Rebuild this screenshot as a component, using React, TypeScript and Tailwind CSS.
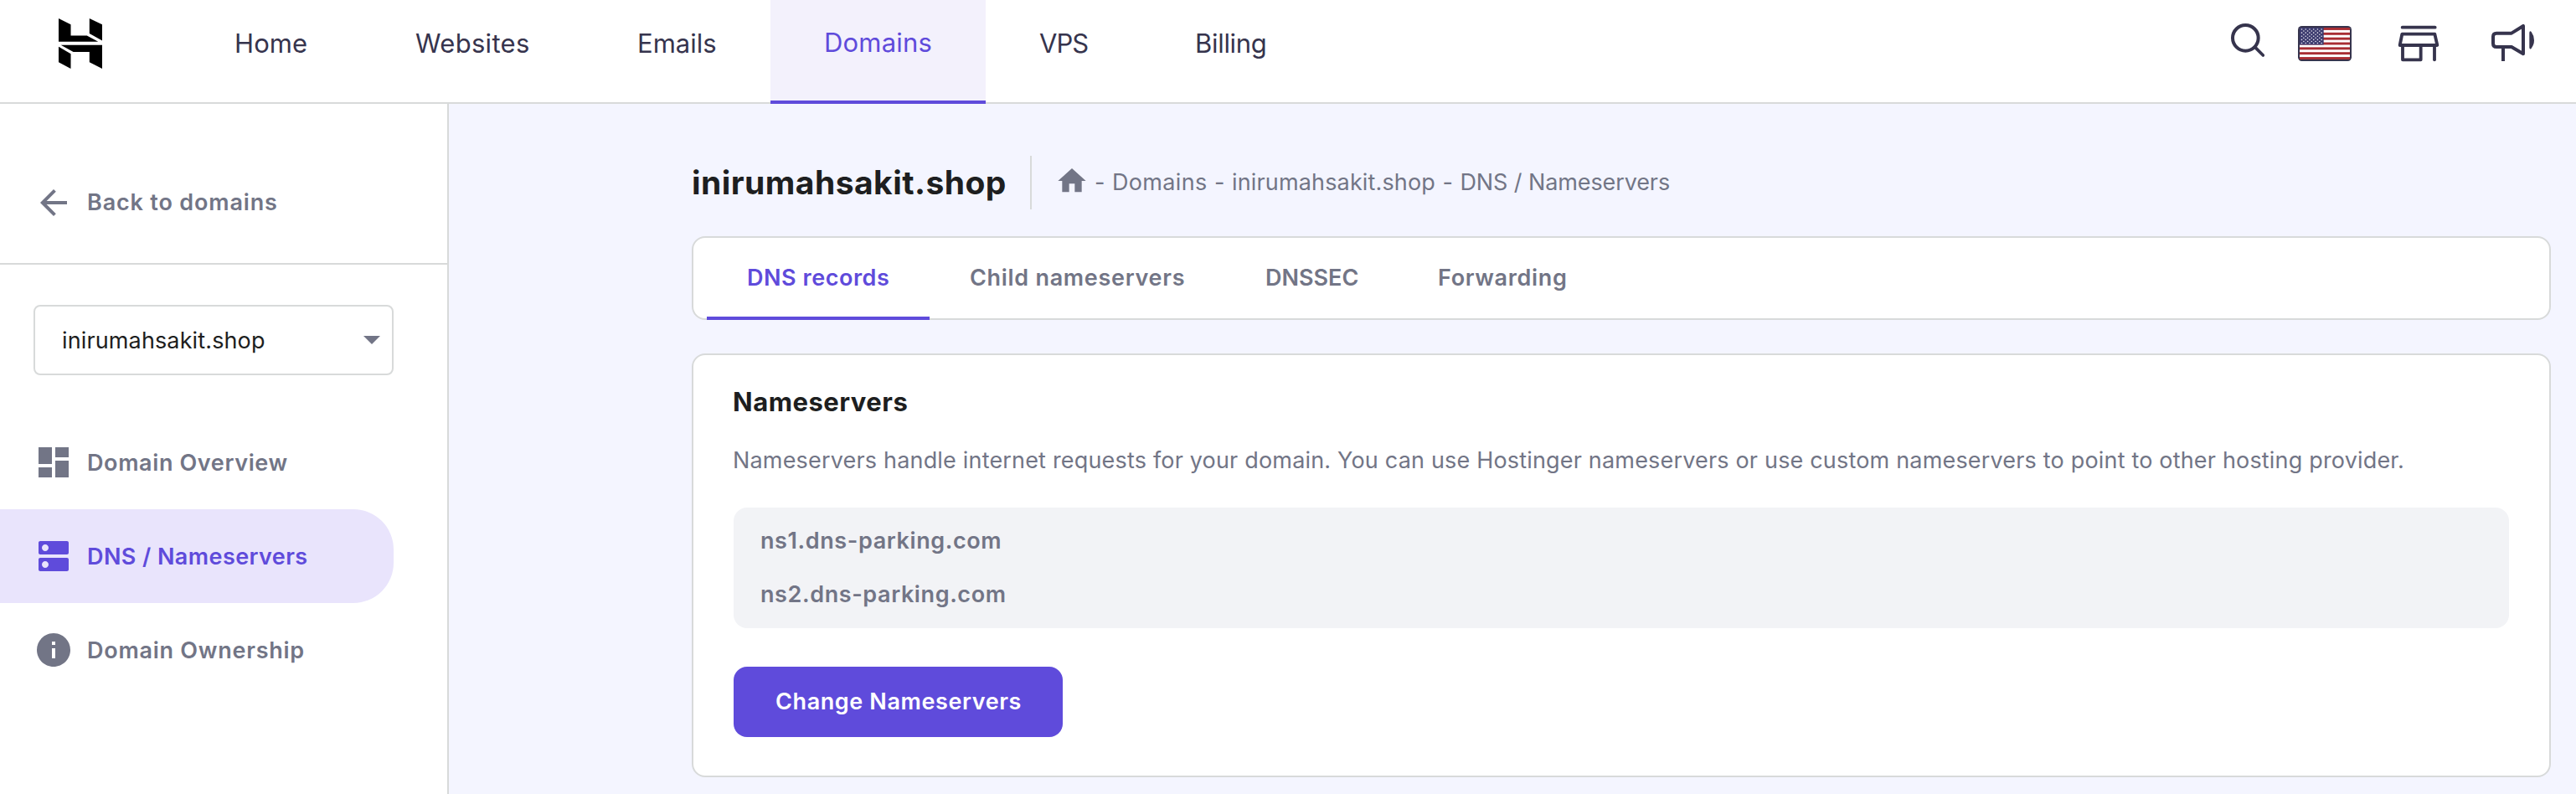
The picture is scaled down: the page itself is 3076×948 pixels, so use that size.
import type { ReactNode } from "react";
import { MdArrowBack, MdArrowDropDown, MdDashboard, MdDns, MdHome, MdInfo } from "react-icons/md";

function Logo() {
  return (
    <svg className="mt-[22px] ml-[70px] h-[60px] w-[52px] shrink-0" viewBox="30 24 154 179" preserveAspectRatio="none" fill="#000">
      <path d="M30 24 L73 46 V85 H130 L170 107 H30 Z" />
      <path d="M139 24 L184 46 V103 L139 78 Z" />
      <path d="M38 119 H184 V203 L139 180 V143 H82 Z" />
      <path d="M30 125 L73 150 V203 L30 180 Z" />
    </svg>
  );
}

function SearchIcon() {
  return (
    <svg className="mt-[28px] h-[40px] w-[40px]" viewBox="42 24 120 120" fill="none" stroke="#36344d" strokeLinecap="round">
      <circle cx="94" cy="76" r="46" strokeWidth="12" />
      <path d="M129 110 L157 138" strokeWidth="11" />
    </svg>
  );
}

function FlagIcon() {
  const stripe = 114 / 13;
  return (
    <svg className="mt-[31px] ml-[40px] h-[42px] w-[64px]" viewBox="0 0 192 126">
      <rect x="0" y="0" width="192" height="126" rx="14" fill="#36344d" />
      <rect x="6" y="6" width="180" height="114" rx="4" fill="#ffffff" />
      {[0, 2, 4, 6, 8, 10, 12].map((i) => (
        <rect key={i} x="6" y={6 + i * stripe} width="180" height={stripe} fill="#a82d33" />
      ))}
      <rect x="6" y="6" width="86" height={stripe * 7} fill="#3c3b6e" />
      {[0, 1, 2, 3, 4, 5, 6, 7, 8].map((row) =>
        (row % 2 === 0 ? [0, 1, 2, 3, 4, 5] : [0.5, 1.5, 2.5, 3.5, 4.5]).map((col) => (
          <circle key={`${row}-${col}`} cx={13.5 + col * 14.2} cy={12 + row * 6.2} r="2.4" fill="#e6e6f0" />
        ))
      )}
    </svg>
  );
}

function StoreIcon() {
  return (
    <svg className="mt-[30px] ml-[55px] h-[44px] w-[50px]" viewBox="39 30 150 132" fill="none" stroke="#36344d" strokeWidth="11.5" strokeLinecap="round" strokeLinejoin="round">
      <path d="M56 38 H173" />
      <path d="M55 62 H172 L181 102 H47 Z" />
      <path d="M57 102 V154 H122 V102" />
      <path d="M171 102 V154" />
    </svg>
  );
}

function MegaphoneIcon() {
  return (
    <svg className="mt-[29px] mr-[50px] ml-[62px] h-[45px] w-[51px]" viewBox="375 27 153 135" fill="none" stroke="#36344d" strokeWidth="12" strokeLinejoin="round">
      <path d="M393 59 H447 L489 33 V133 L447 108 H393 Q381 108 381 96 V71 Q381 59 393 59 Z" />
      <path d="M417 108 V159" />
      <path d="M511 56 Q513 49 518 54 Q528 68 528 84 Q528 100 518 113 Q513 119 511 111 Z" fill="#36344d" stroke="none" />
    </svg>
  );
}

function NavItem({ label, className }: { label: string; className: string }) {
  return (
    <a className={`flex shrink-0 items-center pb-5 pl-16 text-[31px] leading-none whitespace-nowrap ${className}`}>
      {label}
    </a>
  );
}

function SideItem({ icon, label, className }: { icon: ReactNode; label: string; className: string }) {
  return (
    <a className={`flex h-28 w-[470px] items-center gap-4 pl-10 text-[27px] leading-none font-semibold whitespace-nowrap ${className}`}>
      {icon}
      {label}
    </a>
  );
}

function Tab({ label, className }: { label: string; className: string }) {
  return (
    <a className={`flex h-[98px] items-center border-b-4 pl-12 text-[27px] leading-none font-semibold whitespace-nowrap ${className}`}>
      {label}
    </a>
  );
}

export default function App() {
  return (
    <div className="flex h-[948px] w-full flex-col overflow-hidden bg-[#f4f5ff] font-['Inter','Noto_Sans',sans-serif] text-[#727586]">
      <header className="flex h-[124px] shrink-0 items-start border-b-2 border-[#d8dada] bg-white">
        <Logo />
        <nav className="ml-[94px] flex items-start">
          <NavItem label="Home" className="h-[122px] w-[216px] tracking-[0.1px] text-[#36344d]" />
          <NavItem label="Websites" className="h-[122px] w-[265px] tracking-[0.3px] text-[#36344d]" />
          <NavItem label="Emails" className="h-[122px] w-[223px] text-[#36344d]" />
          <NavItem label="Domains" className="h-[124px] w-[257px] border-b-4 border-[#5f4bdb] bg-[#f3f1fc] tracking-[0.2px] text-[#5f4bdb]" />
          <NavItem label="VPS" className="h-[122px] w-[186px] tracking-[-1px] text-[#36344d]" />
          <NavItem label="Billing" className="h-[122px] w-[160px] tracking-[-0.3px] text-[#36344d]" />
        </nav>
        <div className="ml-auto flex items-start">
          <SearchIcon />
          <FlagIcon />
          <StoreIcon />
          <MegaphoneIcon />
        </div>
      </header>

      <div className="flex min-h-0 flex-1">
        <aside className="w-[536px] shrink-0 border-r-2 border-[#d8dada] bg-white">
          <a className="flex h-[192px] items-center gap-4 border-b-2 border-[#d8dada] pt-[46px] pl-10 text-[27px] leading-none font-semibold tracking-[0.83px]">
            <MdArrowBack className="size-12" />
            <span className="mb-0.5">Back to domains</span>
          </a>
          <div className="mt-12 ml-10 flex h-[84px] w-[430px] items-center justify-between rounded-lg border-2 border-[#d8dada] pl-[32px] text-[27px] leading-none tracking-[0.13px] text-[#1d1e20]">
            inirumahsakit.shop
            <MdArrowDropDown className="mb-0.5 size-12 text-[#727586]" />
          </div>
          <nav className="mt-12">
            <SideItem icon={<MdDashboard className="size-12" />} label="Domain Overview" className="tracking-[0.62px]" />
            <SideItem icon={<MdDns className="size-12" />} label="DNS / Nameservers" className="rounded-r-[48px] bg-[#e9e4fc] tracking-[0.42px] text-[#5f4bdb]" />
            <SideItem icon={<MdInfo className="size-12" />} label="Domain Ownership" className="tracking-[0.74px]" />
          </nav>
        </aside>

        <main className="min-w-0 flex-1 pt-[62px] pr-[30px] pl-[290px]">
          <div className="flex h-16">
            <h1 className="flex w-[404px] shrink-0 items-center pb-0.5 text-[39px] leading-none font-bold tracking-[0.45px] text-[#1d1e20]">inirumahsakit.shop</h1>
            <div className="flex items-center border-l-2 border-[#d8dada] pl-7 text-[27px] leading-none whitespace-nowrap">
              <MdHome className="mb-1 size-10" />
              <div className="mb-0.5 ml-[7px] flex gap-[8.5px]">
                <span>-</span>
                <span className="tracking-[0.35px]">Domains</span>
                <span>-</span>
                <span className="tracking-[0.15px]">inirumahsakit.shop</span>
                <span>-</span>
                <span className="tracking-[-0.1px]">DNS / Nameservers</span>
              </div>
            </div>
          </div>

          <div className="mt-8 flex h-[100px] rounded-2xl border-2 border-[#d8dada] bg-white pl-4">
            <Tab label="DNS records" className="w-[266px] border-[#5f4bdb] tracking-[0.54px] text-[#5f4bdb]" />
            <Tab label="Child nameservers" className="w-[353px] border-transparent tracking-[0.7px]" />
            <Tab label="DNSSEC" className="w-[206px] border-transparent" />
            <Tab label="Forwarding" className="w-[250px] border-transparent tracking-[0.65px]" />
          </div>

          <section className="mt-10 h-[506px] rounded-2xl border-2 border-[#d8dada] bg-white px-12 pt-8">
            <h2 className="-ml-px text-[31px] leading-[48px] font-bold tracking-[0.5px] text-[#1d1e20]">Nameservers</h2>
            <p className="mt-[22px] -ml-px text-[27px] leading-[48px] tracking-[0.18px] whitespace-nowrap">
              Nameservers handle internet requests for your domain. You can use Hostinger nameservers or use custom nameservers to point to other hosting provider.
            </p>
            <div className="mt-8 h-36 rounded-2xl bg-[#f2f3f6] px-8 pt-2 text-[27px] leading-[64px] font-semibold tracking-[0.6px]">
              <p>ns1.dns-parking.com</p>
              <p>ns2.dns-parking.com</p>
            </div>
            <button className="mt-[46px] flex h-[84px] w-[393px] items-center justify-center rounded-2xl bg-[#5f4bdb] pb-0.5 pl-px text-[27px] leading-none font-semibold tracking-[0.6px] whitespace-nowrap text-white">
              Change Nameservers
            </button>
          </section>
        </main>
      </div>
    </div>
  );
}
